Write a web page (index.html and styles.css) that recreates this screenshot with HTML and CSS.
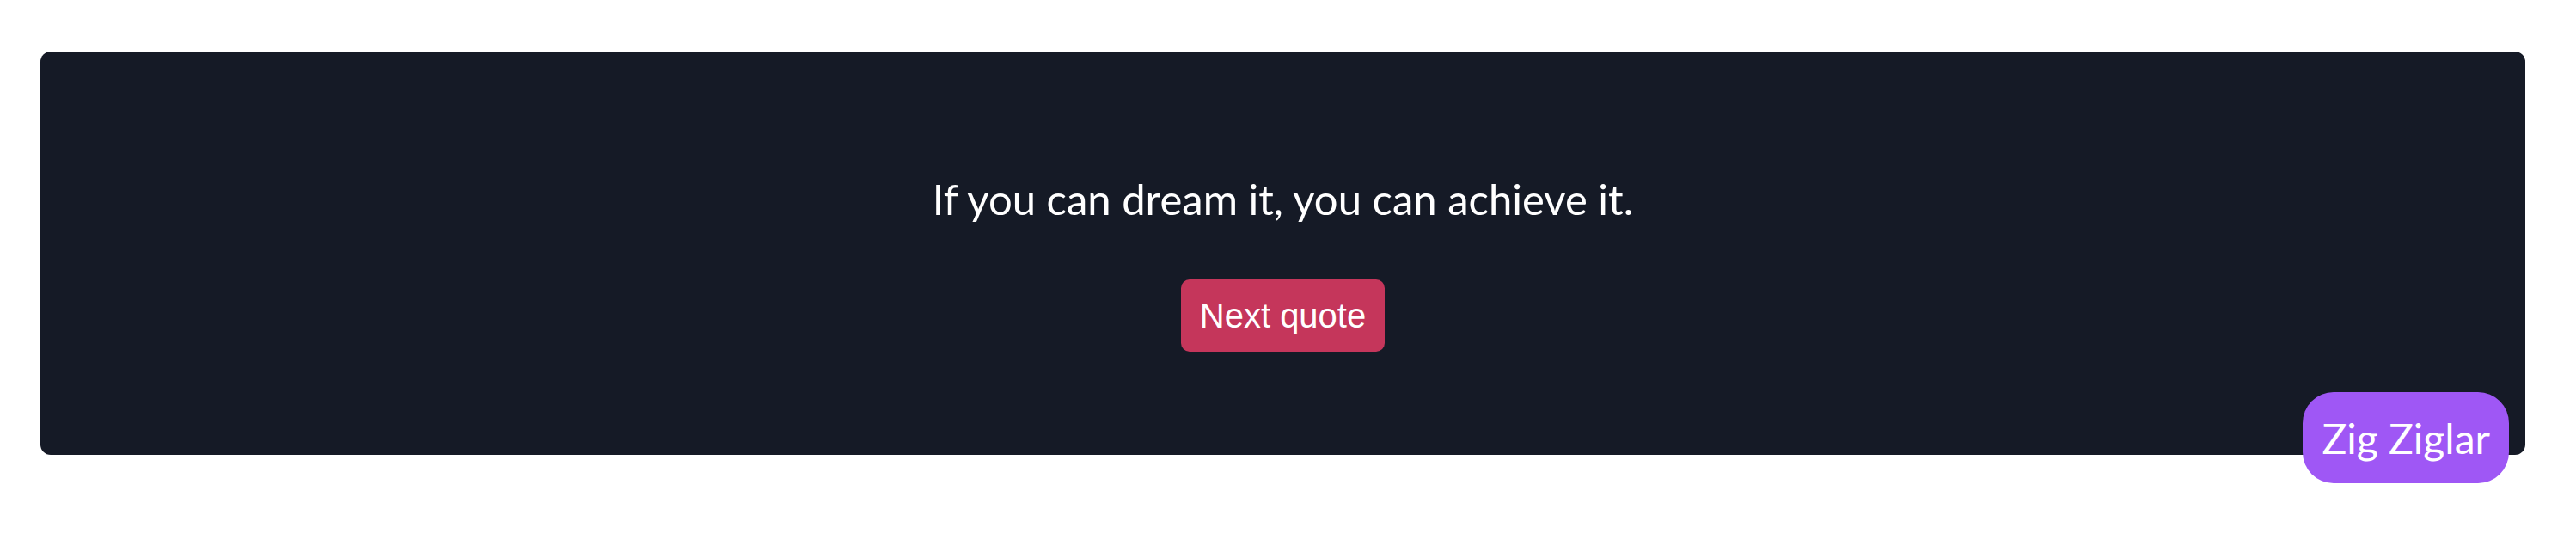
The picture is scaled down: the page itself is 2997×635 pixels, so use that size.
FILE: index.html
```html
<!DOCTYPE html>
<html lang="en">
<head>
<meta charset="utf-8">
<title>Quote</title>
<link rel="stylesheet" href="styles.css">
</head>
<body>
<main class="page">
  <section class="card">
    <p class="quote">If you can dream it, you can achieve it.</p>
    <button class="next-btn" type="button">Next quote</button>
    <span class="author">Zig Ziglar</span>
  </section>
</main>
</body>
</html>
```
FILE: styles.css
```css
html, body {
  margin: 0;
  padding: 0;
  background: #ffffff;
}

.page {
  box-sizing: border-box;
  min-height: 100vh;
  padding: 60px 59px 80px 47px;
}

.card {
  position: relative;
  box-sizing: border-box;
  height: 469px;
  background: #151a26;
  border-radius: 12px;
  padding: 135px 0 0;
  display: flex;
  flex-direction: column;
  align-items: center;
}

.quote {
  margin: 0;
  font-family: Lato, "Noto Sans", sans-serif;
  font-size: 49px;
  line-height: 72px;
  color: #ffffff;
}

.next-btn {
  margin-top: 58px;
  height: 84px;
  padding: 0 22px;
  border: none;
  border-radius: 10px;
  background: #c5365b;
  color: #ffffff;
  font-family: "Liberation Sans", Arial, sans-serif;
  font-size: 40px;
  line-height: 46px;
  cursor: pointer;
}

.author {
  position: absolute;
  right: 19px;
  bottom: -33px;
  box-sizing: border-box;
  height: 106px;
  padding: 0 22px;
  display: flex;
  align-items: center;
  border-radius: 36px;
  background: #9f57f5;
  color: #ffffff;
  font-family: Lato, "Noto Sans", sans-serif;
  font-size: 48px;
}
```
